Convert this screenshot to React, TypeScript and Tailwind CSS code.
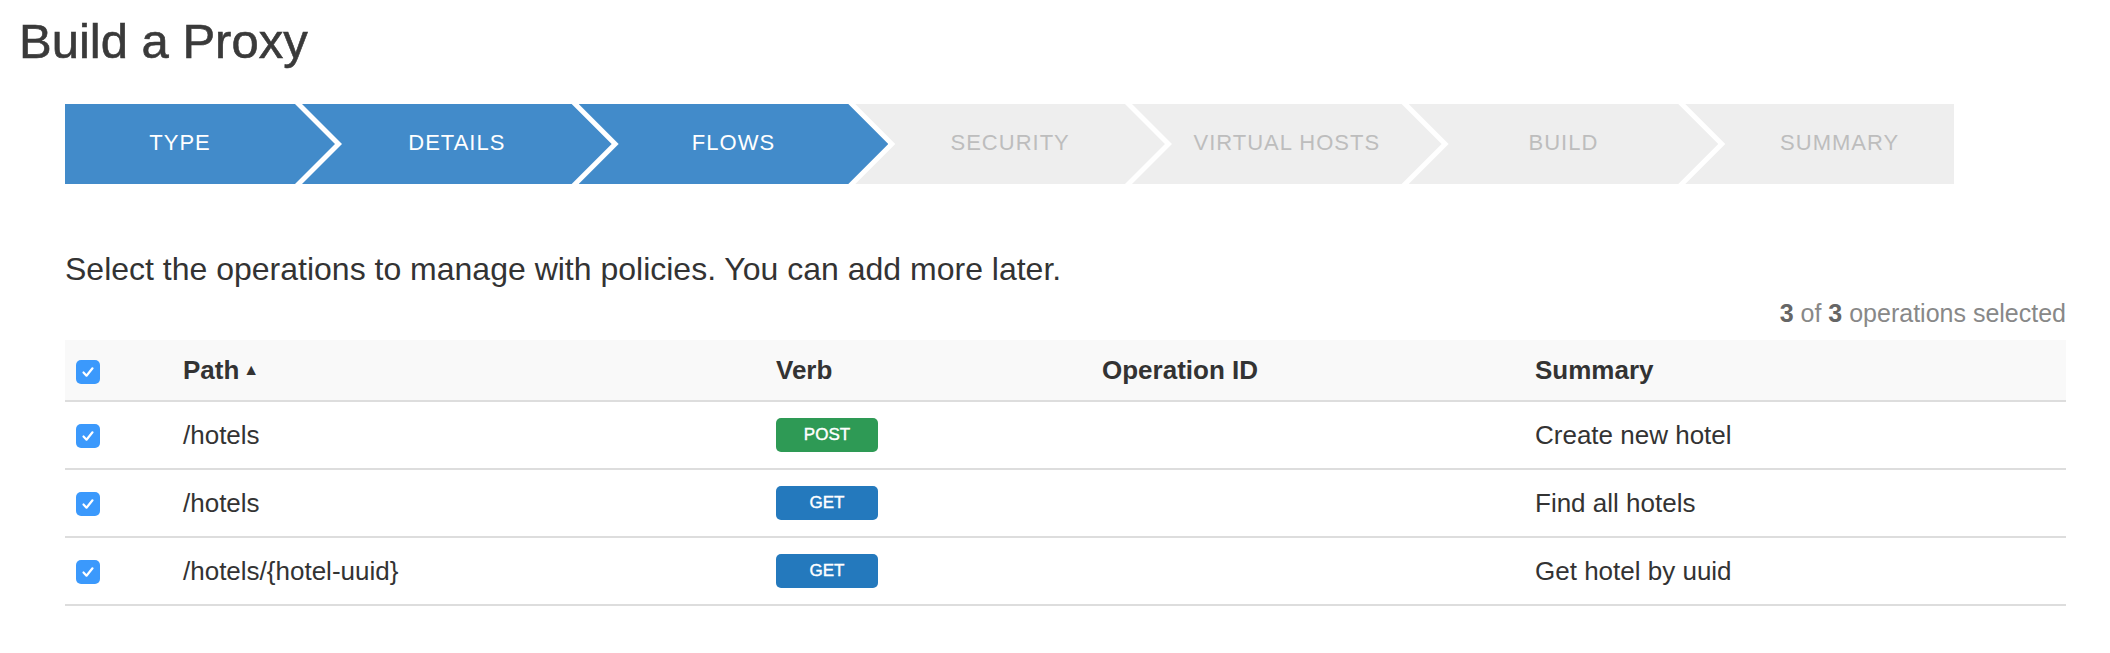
import React from "react";

type Step = { label: string; active: boolean; cls: string };

// chevrons: 40px deep, 7px white gap between neighbours
const steps: Step[] = [
  {
    label: "TYPE",
    active: true,
    cls: "w-[270px] pr-[40px] [clip-path:polygon(0_0,230px_0,100%_50%,230px_100%,0_100%)]",
  },
  {
    label: "DETAILS",
    active: true,
    cls: "w-[309.67px] -ml-[33px] px-[40px] [clip-path:polygon(0_0,269.67px_0,100%_50%,269.67px_100%,0_100%,40px_50%)]",
  },
  {
    label: "FLOWS",
    active: true,
    cls: "w-[309.67px] -ml-[33px] px-[40px] [clip-path:polygon(0_0,269.67px_0,100%_50%,269.67px_100%,0_100%,40px_50%)]",
  },
  {
    label: "SECURITY",
    active: false,
    cls: "w-[309.67px] -ml-[33px] px-[40px] [clip-path:polygon(0_0,269.67px_0,100%_50%,269.67px_100%,0_100%,40px_50%)]",
  },
  {
    label: "VIRTUAL HOSTS",
    active: false,
    cls: "w-[309.67px] -ml-[33px] px-[40px] [clip-path:polygon(0_0,269.67px_0,100%_50%,269.67px_100%,0_100%,40px_50%)]",
  },
  {
    label: "BUILD",
    active: false,
    cls: "w-[309.67px] -ml-[33px] px-[40px] [clip-path:polygon(0_0,269.67px_0,100%_50%,269.67px_100%,0_100%,40px_50%)]",
  },
  {
    label: "SUMMARY",
    active: false,
    cls: "w-[268.7px] -ml-[33px] pl-[40px] [clip-path:polygon(0_0,100%_0,100%_100%,0_100%,40px_50%)]",
  },
];

type Operation = { path: string; verb: "POST" | "GET"; opId: string; summary: string };

const operations: Operation[] = [
  { path: "/hotels", verb: "POST", opId: "", summary: "Create new hotel" },
  { path: "/hotels", verb: "GET", opId: "", summary: "Find all hotels" },
  { path: "/hotels/{hotel-uuid}", verb: "GET", opId: "", summary: "Get hotel by uuid" },
];

const Checkbox: React.FC = () => (
  <span className="flex h-[24px] w-[24px] items-center justify-center rounded-[5px] bg-[#3b99fc]">
    <svg width="16" height="16" viewBox="0 0 16 16" fill="none">
      <path d="M3.5 8.5l3 3.2 6-7.4" stroke="white" strokeWidth="2.2" strokeLinecap="round" strokeLinejoin="round" />
    </svg>
  </span>
);

const VerbBadge: React.FC<{ verb: Operation["verb"] }> = ({ verb }) => (
  <span
    className={
      "flex h-[34px] w-[102px] items-center justify-center rounded-[5px] text-[17px] text-white [-webkit-text-stroke:0.4px_white] " +
      (verb === "POST" ? "bg-[#2e9a55]" : "bg-[#2479bd]")
    }
  >
    {verb}
  </span>
);

const cols = "grid grid-cols-[118px_593px_326px_433px_1fr] items-center";

export default function App() {
  return (
    <div className="h-[653px] w-[2110px] bg-white font-['Liberation_Sans',Arial,sans-serif] text-[#333]">
      <h1 className="pl-[19px] pt-[17px] text-[49px] leading-none text-[#3a3a3a] [-webkit-text-stroke:0.6px_#3a3a3a]">
        Build a Proxy
      </h1>

      <div className="pl-[65px] pr-[44px]">
        {/* wizard steps */}
        <div className="mt-[38px] flex h-[80px]">
          {steps.map((s) => (
            <div
              key={s.label}
              className={
                "flex h-full shrink-0 items-center justify-center pb-[4px] text-[22px] tracking-[1px] " +
                s.cls +
                " " +
                (s.active ? "bg-[#428bca] text-white" : "bg-[#eeeeee] text-[#bdbdbd]")
              }
            >
              {s.label}
            </div>
          ))}
        </div>

        <p className="mt-[65px] text-[32px] leading-[40px] text-[#333]">
          Select the operations to manage with policies. You can add more later.
        </p>

        <div className="mt-[9px] text-right text-[25px] leading-[30px] text-[#888]">
          <span className="font-bold text-[#666]">3</span> of <span className="font-bold text-[#666]">3</span>{" "}
          operations selected
        </div>

        {/* operations table */}
        <div className="mt-[12px] text-[26px]">
          <div className={cols + " h-[62px] border-b-2 border-[#dddddd] bg-[#f9f9f9] font-bold"}>
            <div className="pl-[11px] pt-[3px]">
              <Checkbox />
            </div>
            <div className="flex items-center">
              Path<span className="ml-[4px] text-[16px]">▲</span>
            </div>
            <div>Verb</div>
            <div>Operation ID</div>
            <div>Summary</div>
          </div>

          {operations.map((op, i) => (
            <div key={i} className={cols + " h-[68px] border-b-2 border-[#dddddd]"}>
              <div className="pl-[11px] pt-[2px]">
                <Checkbox />
              </div>
              <div>{op.path}</div>
              <div>
                <VerbBadge verb={op.verb} />
              </div>
              <div>{op.opId}</div>
              <div>{op.summary}</div>
            </div>
          ))}
        </div>
      </div>
    </div>
  );
}
